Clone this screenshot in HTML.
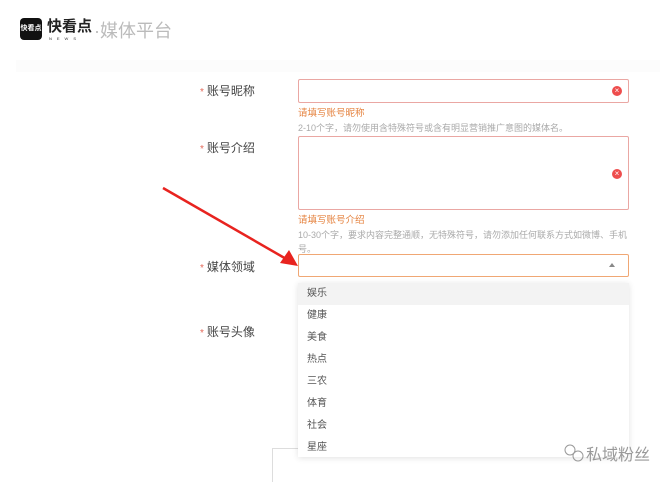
<!DOCTYPE html>
<html><head><meta charset="utf-8"><style>
*{margin:0;padding:0;box-sizing:border-box}
body{width:670px;height:482px;background:#fff;position:relative;overflow:hidden;font-family:"Liberation Sans","Noto Sans CJK SC",sans-serif}
.a{position:absolute}
.lbl{font-size:12px;color:#444}
.lbl b{color:#e46a5a;font-weight:normal;font-size:10px;margin-right:3px}
.inp{border:1px solid #eaa7a3;border-radius:2px;background:#fff}
.err{font-size:9.5px;color:#e5823e}
.hint{font-size:9px;color:#aaa;line-height:14px}
.x{width:10px;height:10px;border-radius:50%;background:#ee4d4d;color:#fff;font-size:8px;line-height:10px;text-align:center}
.dd div{height:22px;line-height:22px;padding-left:9px;font-size:10px;color:#555}
</style></head><body>
<div class="a" style="left:16px;top:60px;width:644px;height:12px;background:#fcfcfc"></div>
<div class="a" style="left:20px;top:18px;width:22px;height:22px;background:#111;border-radius:4px;color:#fff;font-size:7px;font-weight:bold;line-height:22px;text-align:center">快看点</div>
<div class="a" style="left:47px;top:18px;font-size:15px;font-weight:bold;color:#222;line-height:18px">快看点</div>
<div class="a" style="left:49px;top:36px;font-size:4px;letter-spacing:5px;color:#333">NEWS</div>
<div class="a" style="left:94px;top:20px;font-size:18px;color:#bbb;line-height:22px">·媒体平台</div>

<div class="a lbl" style="left:200px;top:82px"><b>*</b>账号昵称</div>
<div class="a inp" style="left:298px;top:79px;width:331px;height:24px"></div>
<div class="a x" style="left:612px;top:86px">×</div>
<div class="a err" style="left:298px;top:105px">请填写账号昵称</div>
<div class="a hint" style="left:298px;top:121px">2-10个字，请勿使用含特殊符号或含有明显营销推广意图的媒体名。</div>

<div class="a lbl" style="left:200px;top:139px"><b>*</b>账号介绍</div>
<div class="a inp" style="left:298px;top:136px;width:331px;height:74px"></div>
<div class="a x" style="left:612px;top:169px">×</div>
<div class="a err" style="left:298px;top:212px">请填写账号介绍</div>
<div class="a hint" style="left:298px;top:228px;width:332px">10-30个字，要求内容完整通顺，无特殊符号，请勿添加任何联系方式如微博、手机号。</div>

<div class="a lbl" style="left:200px;top:258px"><b>*</b>媒体领域</div>
<div class="a" style="left:298px;top:254px;width:331px;height:23px;border:1px solid #f0a774;border-radius:2px"></div>
<div class="a" style="left:609px;top:263px;width:0;height:0;border-left:3px solid transparent;border-right:3px solid transparent;border-bottom:4px solid #888"></div>

<div class="a lbl" style="left:200px;top:323px"><b>*</b>账号头像</div>
<div class="a" style="left:272px;top:448px;width:26px;height:34px;border-left:1px solid #ddd;border-top:1px solid #ddd"></div>

<div class="a dd" style="left:298px;top:283px;width:331px;height:174px;background:#fff;box-shadow:0 1px 6px rgba(0,0,0,.12);overflow:hidden">
<div style="background:#f3f3f3">娱乐</div><div>健康</div><div>美食</div><div>热点</div><div>三农</div><div>体育</div><div>社会</div><div>星座</div>
</div>

<svg class="a" style="left:0;top:0" width="670" height="482">
<line x1="163" y1="188" x2="288" y2="260" stroke="#e8231f" stroke-width="2.5"/>
<polygon points="298,266 280,263 289,250" fill="#e8231f"/>
<circle cx="570" cy="450" r="5" fill="none" stroke="#999"/>
<circle cx="578" cy="456" r="5" fill="none" stroke="#999"/>
</svg>
<div class="a" style="left:586px;top:441px;font-size:16px;color:#999">私域粉丝</div>
</body></html>
